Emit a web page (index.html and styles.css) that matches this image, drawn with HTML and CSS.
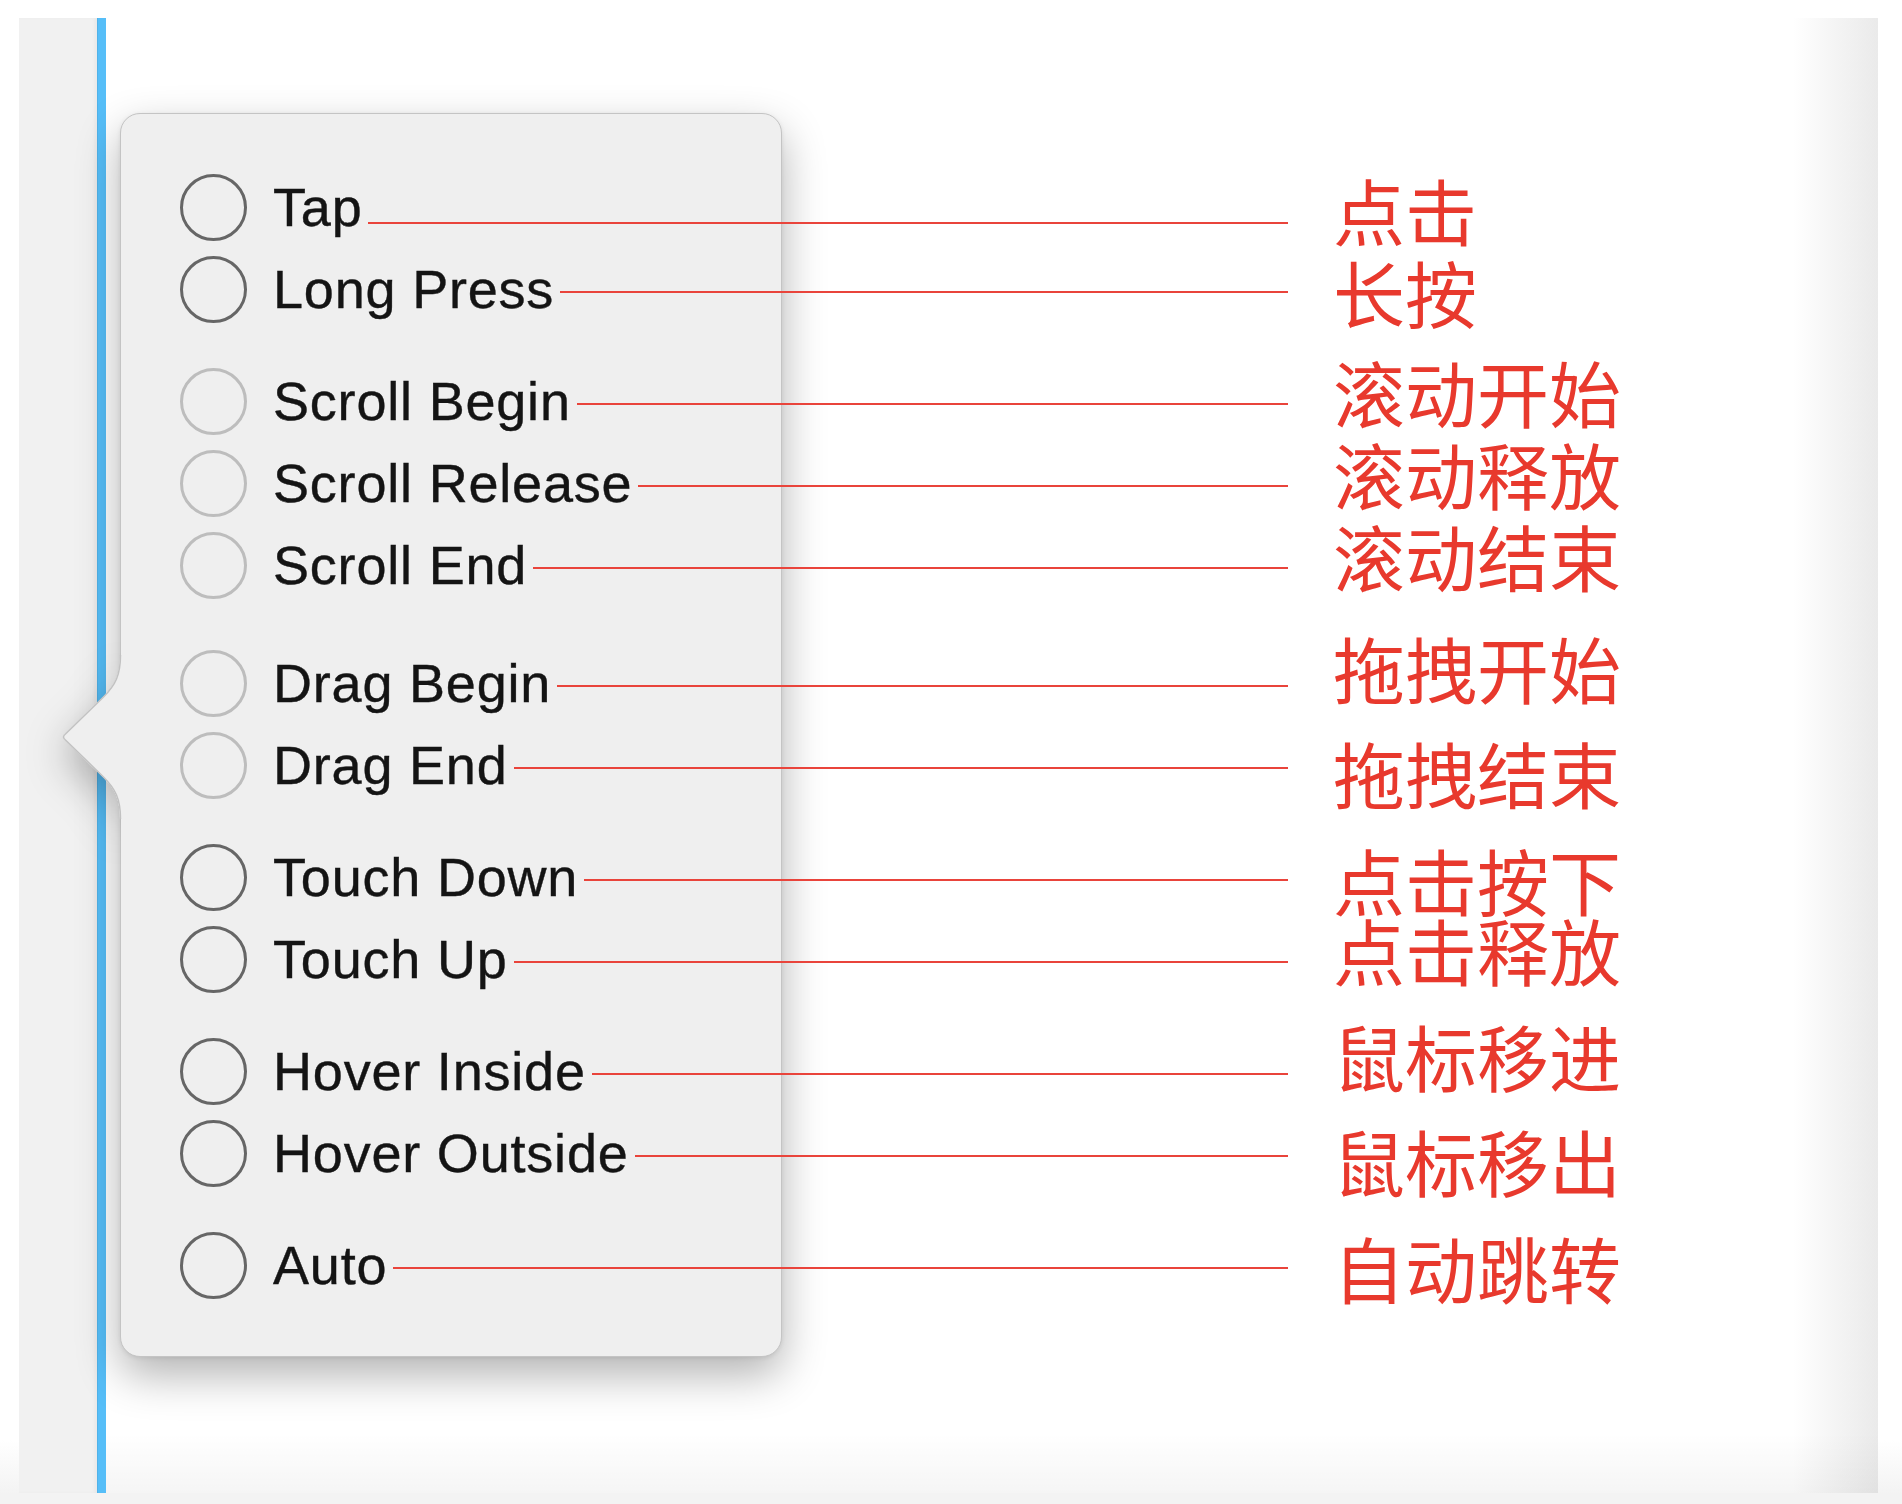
FILE: index.html
```html
<!DOCTYPE html>
<html lang="zh-CN">
<head>
    <meta charset="UTF-8">
    <meta name="viewport" content="width=device-width, initial-scale=1.0">
    <title>触发方式</title>
    <link rel="stylesheet" href="styles.css">
</head>
<body>
    <div class="frame">
        <div class="sidebar"></div>
        <div class="rail"></div>
        <div class="canvas">
            <div class="popover">
                <svg class="arrow" width="64" height="164" viewBox="0 0 64 164" overflow="visible">
                    <defs>
                        <filter id="arrowShadow" x="-150%" y="-60%" width="400%" height="220%">
                            <feDropShadow dx="0" dy="16" stdDeviation="20" flood-color="#000" flood-opacity="0.3"/>
                        </filter>
                        <clipPath id="arrowOutside">
                            <rect x="-80" y="-80" width="141" height="340"/>
                        </clipPath>
                    </defs>
                    <g clip-path="url(#arrowOutside)">
                        <path filter="url(#arrowShadow)" fill="#efefef" d="M64 0 L60 0 C60 20 55 30 43 42 L5 79 Q1 82 5 85 L43 122 C55 134 60 144 60 164 L64 164 Z"/>
                    </g>
                    <path fill="#efefef" d="M64 0 L60 0 C60 20 55 30 43 42 L5 79 Q1 82 5 85 L43 122 C55 134 60 144 60 164 L64 164 Z"/>
                    <path fill="none" stroke="#c2c2c2" stroke-width="1.5" d="M60.5 0 C60.5 20 55.5 30 43.5 42 L5.5 79 Q1.5 82 5.5 85 L43.5 122 C55.5 134 60.5 144 60.5 164"/>
                </svg>

                <div class="group">
                    <div class="row">
                        <span class="radio"></span>
                        <span class="name">Tap</span>
                        <span class="lead low"></span>
                        <span class="note dn">点击</span>
                    </div>
                    <div class="row">
                        <span class="radio"></span>
                        <span class="name">Long Press</span>
                        <span class="lead"></span>
                        <span class="note dn">长按</span>
                    </div>
                </div>

                <div class="group">
                    <div class="row">
                        <span class="radio off"></span>
                        <span class="name">Scroll Begin</span>
                        <span class="lead"></span>
                        <span class="note up">滚动开始</span>
                    </div>
                    <div class="row">
                        <span class="radio off"></span>
                        <span class="name">Scroll Release</span>
                        <span class="lead"></span>
                        <span class="note up">滚动释放</span>
                    </div>
                    <div class="row">
                        <span class="radio off"></span>
                        <span class="name">Scroll End</span>
                        <span class="lead"></span>
                        <span class="note up">滚动结束</span>
                    </div>
                </div>

                <div class="group drag">
                    <div class="row">
                        <span class="radio off"></span>
                        <span class="name">Drag Begin</span>
                        <span class="lead"></span>
                        <span class="note up2">拖拽开始</span>
                    </div>
                    <div class="row">
                        <span class="radio off"></span>
                        <span class="name">Drag End</span>
                        <span class="lead"></span>
                        <span class="note dn2">拖拽结束</span>
                    </div>
                </div>

                <div class="group">
                    <div class="row">
                        <span class="radio"></span>
                        <span class="name">Touch Down</span>
                        <span class="lead"></span>
                        <span class="note dn">点击按下</span>
                    </div>
                    <div class="row">
                        <span class="radio"></span>
                        <span class="name">Touch Up</span>
                        <span class="lead"></span>
                        <span class="note up">点击释放</span>
                    </div>
                </div>

                <div class="group">
                    <div class="row">
                        <span class="radio"></span>
                        <span class="name">Hover Inside</span>
                        <span class="lead"></span>
                        <span class="note up2">鼠标移进</span>
                    </div>
                    <div class="row">
                        <span class="radio"></span>
                        <span class="name">Hover Outside</span>
                        <span class="lead"></span>
                        <span class="note dn2">鼠标移出</span>
                    </div>
                </div>

                <div class="group">
                    <div class="row">
                        <span class="radio"></span>
                        <span class="name">Auto</span>
                        <span class="lead"></span>
                        <span class="note dn">自动跳转</span>
                    </div>
                </div>
            </div>
        </div>
    </div>
    <div class="footer"></div>
</body>
</html>
```

FILE: styles.css
```css
* {
    box-sizing: border-box;
}

body {
    margin: 0;
    width: 1902px;
    height: 1504px;
    overflow: hidden;
    background: linear-gradient(to bottom, #fff 1440px, #f1f1f1 1504px);
    font-family: "Liberation Sans", Arial, sans-serif;
}

.frame {
    display: flex;
    height: 1475px;
    margin: 18px 24px 0 19px;
}

.sidebar {
    width: 78px;
    background: #f1f1f1;
    box-shadow: inset -3px 0 3px rgba(0, 0, 0, 0.03);
}

.rail {
    width: 9px;
    background: #56bef8;
    border-left: 1px solid rgba(0, 0, 0, 0.06);
}

.canvas {
    flex: 1;
    padding: 95px 0 0 14px;
    background:
        linear-gradient(to bottom, rgba(0, 0, 0, 0) calc(100% - 60px), rgba(0, 0, 0, 0.04)),
        linear-gradient(to right, #fff calc(100% - 85px), #eaeaea);
}

.footer {
    height: 11px;
    background: #f3f3f3;
}

/* popover card with the arrow on its left edge */
.popover {
    position: relative;
    width: 662px;
    padding: 52px 0 50px 59px;
    background: #efefef;
    border: 1px solid #c4c4c4;
    border-radius: 20px;
    box-shadow: 0 1px 4px rgba(0, 0, 0, 0.08), 0 18px 44px rgba(0, 0, 0, 0.3);
}

.popover .arrow {
    position: absolute;
    left: -61px;
    top: 541px;
}

.group + .group {
    margin-top: 30px;
}

.group.drag {
    margin-top: 36px;
}

.row {
    display: flex;
    align-items: center;
    width: 1453px;
    height: 82px;
}

.radio {
    flex: none;
    width: 67px;
    height: 67px;
    margin-right: 26px;
    border: 3.5px solid #666;
    border-radius: 50%;
}

.radio.off {
    border-color: #bdbdbd;
}

.name {
    font-size: 54px;
    line-height: 1;
    letter-spacing: 0.8px;
    color: #141414;
    -webkit-text-stroke: 0.4px #141414;
    white-space: nowrap;
}

/* red leader line from the option to its note */
.lead {
    flex: 1;
    height: 2px;
    margin: 6px 0 0 6px;
    background: #e9443b;
}

.lead.low {
    margin-top: 32px;
}

.note {
    flex: none;
    width: 300px;
    margin-left: 45px;
    font-family: "Noto Sans CJK SC", sans-serif;
    font-size: 72px;
    line-height: 1;
    color: #e8392d;
    white-space: nowrap;
}

.note.dn {
    margin-top: 4px;
}

.note.dn2 {
    margin-top: 14px;
}

.note.up {
    margin-bottom: 20px;
}

.note.up2 {
    margin-bottom: 32px;
}
```
